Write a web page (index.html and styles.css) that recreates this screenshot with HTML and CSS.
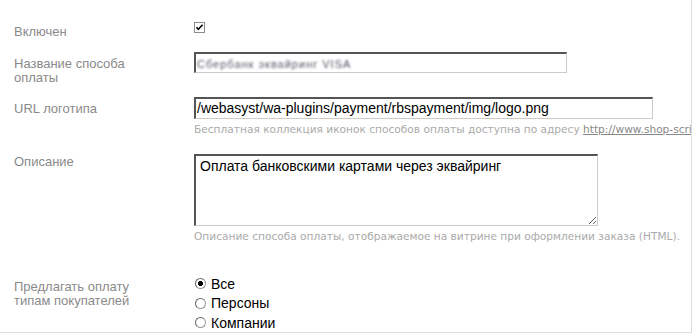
FILE: index.html
```html
<!DOCTYPE html>
<html lang="ru">
<head>
  <meta charset="UTF-8" />
  <title>Способ оплаты</title>
  <link rel="stylesheet" href="styles.css">
</head>
<body>
  <div class="form">
    <div class="field field-check">
      <div class="name">Включен</div>
      <div class="value">
        <span class="check">
          <svg width="11" height="11" viewBox="0 0 11 11">
            <rect x="0.5" y="0.5" width="10" height="10" fill="#fff" stroke="#8c8c8c"/>
            <path d="M2.5 5.2 L4.3 7.3 L8.6 2.8" fill="none" stroke="#000" stroke-width="1.6"/>
          </svg>
        </span>
      </div>
    </div>

    <div class="field field-name">
      <div class="name">Название способа оплаты</div>
      <div class="value">
        <div class="input input-name"><span class="blurred">Сбербанк эквайринг VISA</span></div>
      </div>
    </div>

    <div class="field field-logo">
      <div class="name">URL логотипа</div>
      <div class="value">
        <div class="input input-logo">/webasyst/wa-plugins/payment/rbspayment/img/logo.png</div>
        <div class="hint">Бесплатная коллекция иконок способов оплаты доступна по адресу <a href="#">http://www.shop-script.ru/help/payment-icons/</a></div>
      </div>
    </div>

    <div class="field field-desc">
      <div class="name">Описание</div>
      <div class="value">
        <textarea class="textarea">Оплата банковскими картами через эквайринг</textarea>
        <div class="hint">Описание способа оплаты, отображаемое на витрине при оформлении заказа (HTML).</div>
      </div>
    </div>

    <div class="field field-types">
      <div class="name">Предлагать оплату типам покупателей</div>
      <div class="value radios">
        <label class="radio"><span class="dot on"></span>Все</label>
        <label class="radio"><span class="dot"></span>Персоны</label>
        <label class="radio"><span class="dot"></span>Компании</label>
      </div>
    </div>
  </div>
</body>
</html>
```

FILE: styles.css
```css
body {
  margin: 0;
  background: #fff;
  font-family: "Liberation Sans", Arial, sans-serif;
}
.form {
  width: 692px;
  height: 333px;
  border-right: 1px solid #ddd;
  border-bottom: 1px solid #ddd;
  overflow: hidden;
  box-sizing: border-box;
  padding-top: 22px;
}
.field {
  display: flex;
  padding-left: 14px;
}
.name {
  width: 140px;
  margin-right: 40px;
  flex-shrink: 0;
  color: #8a8a8a;
  font-size: 13px;
  line-height: 14px;
}
.value {
  flex: 1;
  min-width: 0;
  white-space: nowrap;
}

.field-check { height: 30px; }
.field-check .name { padding-top: 3px; }
.check { display: block; height: 11px; }
.check svg { display: block; }

.field-name { height: 45px; }
.field-name .name { padding-top: 5px; }
.field-logo { height: 57px; }
.field-logo .name { padding-top: 5px; }
.field-desc { height: 120px; }
.field-desc .name { padding-top: 1px; }
.field-types .name { padding-top: 6px; }

.input {
  box-sizing: border-box;
  height: 21px;
  border: 1px solid #cfcac4;
  border-top: 2px solid #555;
  border-left: 2px solid #555;
  padding: 1px 1px;
  font-size: 14px;
  line-height: 17px;
  color: #000;
  overflow: hidden;
}
.input-name { width: 373px; }
.input-logo { width: 459px; height: 22px; }
.blurred {
  font-size: 11px;
  color: #556;
  letter-spacing: 1px;
  filter: blur(0.8px);
}
.hint {
  margin-top: 3px;
  font-family: "DejaVu Sans", Verdana, sans-serif;
  font-size: 10.6px;
  line-height: 14px;
  color: #aaa;
}
.hint a { color: #888; }

.textarea {
  display: block;
  box-sizing: border-box;
  width: 404px;
  height: 72px;
  margin: 0;
  border: 1px solid #cfcac4;
  border-top: 2px solid #555;
  border-left: 2px solid #555;
  padding: 2px 4px;
  font-family: "Liberation Sans", Arial, sans-serif;
  font-size: 14px;
  line-height: 17px;
  color: #000;
  resize: vertical;
}

.radio {
  display: flex;
  align-items: center;
  height: 19.5px;
  font-size: 14px;
  color: #000;
}
.dot {
  box-sizing: border-box;
  width: 11px;
  height: 11px;
  margin: 0 5px 0 1px;
  border-radius: 50%;
  border: 1px solid #9a9a9a;
  border-top-color: #666;
  border-left-color: #666;
  background: #fff;
}
.dot.on {
  background: radial-gradient(circle, #000 0 2.2px, #fff 2.8px);
}
```
